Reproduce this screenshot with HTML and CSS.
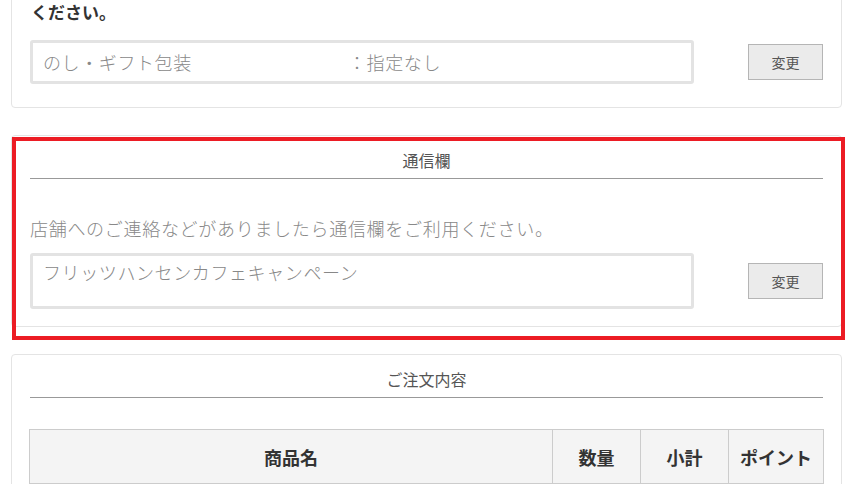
FILE: index.html
```html
<!DOCTYPE html>
<html lang="ja">
<head>
    <meta charset="UTF-8">
    <meta name="viewport" content="width=device-width, initial-scale=1.0">
    <title>ご注文内容の確認</title>
    <link rel="stylesheet" href="styles.css">
</head>
<body>

<div class="page">
    <div class="card card-gift">
        <p class="lead">ください。</p>
        <div class="field-row">
            <div class="field">
                <span class="field-label">のし・ギフト包装</span><span>：指定なし</span>
            </div>
            <button type="button" class="btn-change">変更</button>
        </div>
    </div>

    <div class="card card-message">
        <h2>通信欄</h2>
        <p class="note">店舗へのご連絡などがありましたら通信欄をご利用ください。</p>
        <div class="field-row">
            <div class="field field-tall">フリッツハンセンカフェキャンペーン</div>
            <button type="button" class="btn-change">変更</button>
        </div>
        <div class="highlight"></div>
    </div>

    <div class="card card-order">
        <h2>ご注文内容</h2>
        <table class="order-table">
            <thead>
                <tr>
                    <th class="col-name">商品名</th>
                    <th class="col-qty">数量</th>
                    <th class="col-sub">小計</th>
                    <th class="col-pt">ポイント</th>
                </tr>
            </thead>
        </table>
    </div>
</div>

</body>
</html>
```

FILE: styles.css
```css
body {
    font-family: "Noto Sans CJK JP", "Noto Sans", sans-serif;
    background-color: #fff;
    color: #333;
    margin: 0;
}
.page {
    width: 831px;
    padding-left: 11px;
    margin-top: -30px;
}
.card {
    border: 1px solid #e4e4e4;
    border-radius: 4px;
    padding: 12px 18px 18px;
    margin-bottom: 27px;
}
.card h2 {
    margin: 0;
    font-size: 16px;
    font-weight: 400;
    line-height: 24px;
    color: #555;
    text-align: center;
    padding-bottom: 6px;
    border-bottom: 1px solid #999;
}
.lead {
    margin: 0 0 16px 1px;
    font-size: 17px;
    font-weight: 700;
    line-height: 24px;
    padding-top: 17px;
}
.card-gift {
    padding-bottom: 23px;
}
.card-message {
    position: relative;
    padding-bottom: 17px;
}
.note {
    margin: 36px 0 12px;
    font-size: 18px;
    font-weight: 300;
    line-height: 26px;
    letter-spacing: 0.7px;
    color: #888;
}
.field-row {
    display: flex;
    justify-content: space-between;
    align-items: center;
}
.field {
    height: 38px;
    width: 648px;
    border: 3px solid #e3e3e3;
    border-radius: 3px;
    padding: 0 0 0 10px;
    display: flex;
    align-items: center;
    font-size: 18px;
    font-weight: 300;
    letter-spacing: 0.6px;
    color: #888;
}
.field-label {
    display: inline-block;
    width: 305px;
}
.field-tall {
    height: 47px;
    align-items: flex-start;
    padding-top: 3px;
    line-height: 26px;
}
.btn-change {
    width: 75px;
    height: 36px;
    background-color: #ebebeb;
    border: 1px solid #b5b5b5;
    font-family: inherit;
    font-size: 14px;
    color: #555;
    cursor: pointer;
}
.highlight {
    position: absolute;
    top: 1px;
    left: 0;
    width: 825px;
    height: 195px;
    border: 4px solid #ec1c24;
    pointer-events: none;
}
.order-table {
    width: 795px;
    margin: 31px 0 0 -1px;
    border-collapse: collapse;
}
.order-table th {
    height: 53px;
    background-color: #f4f4f4;
    border: 1px solid #ccc;
    font-size: 18px;
    font-weight: 700;
    color: #333;
    padding: 0;
}
.order-table .col-qty,
.order-table .col-sub {
    width: 87px;
}
.order-table .col-pt {
    width: 94px;
}
```
